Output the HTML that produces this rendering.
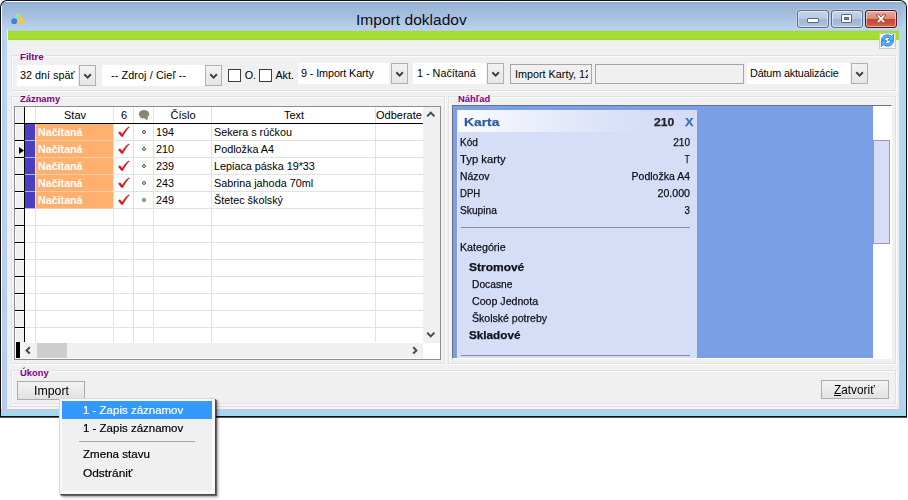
<!DOCTYPE html>
<html>
<head>
<meta charset="utf-8">
<title>Import dokladov</title>
<style>
*{box-sizing:border-box;margin:0;padding:0}
html,body{width:908px;height:500px;overflow:hidden;background:#fff}
body{position:relative;font-family:"Liberation Sans",sans-serif;font-size:10.8px;color:#000}
.abs,.abs *{position:absolute}
div{position:absolute}
span.t{position:absolute;white-space:nowrap;line-height:1}

/* window */
#win{left:0;top:0;width:907px;height:418px;background:#0b0e15;border-radius:7px 7px 0 0}
#frame{left:1px;top:1px;width:905px;height:415px;border-radius:6px 6px 0 0;
 background:linear-gradient(to bottom,#ffffff 0px,#ffffff 1px,#93acc8 1px,#99b5d7 4px,#a6bfde 15px,#bcd3ee 29px,#bdd3ee 60px,#bbcfec 300px,#bccdee 415px)}
#fl{left:1px;top:6px;width:1px;height:410px;background:#fff}
#fl2{left:2px;top:31px;width:2px;height:385px;background:rgba(190,200,215,.35)}
#fr{left:902px;top:4px;width:4px;height:412px;-webkit-mask-image:linear-gradient(to bottom,rgba(0,0,0,.15) 0,rgba(0,0,0,.45) 14px,#000 34px);mask-image:linear-gradient(to bottom,rgba(0,0,0,.15) 0,rgba(0,0,0,.45) 14px,#000 34px);background:linear-gradient(to right,rgba(154,223,245,0),#a6dbea 38%,#9adff5 62%,#9adff5)}
#fb{left:1px;top:409px;width:905px;height:7px;background:linear-gradient(to bottom,#b9d1dc 0,#b9d0de 2px,#bccdee 2px,#bccdee 4px,#93e0f6 5px,#8fe0f6 7px)}
#fd2{left:0;top:417px;width:907px;height:1px;background:#555}
#client{left:7px;top:30px;width:892px;height:379px;background:#f0f0f0;border-left:2px solid #e6f0fb;border-right:1px solid #e6f2fa;border-bottom:2px solid #eef4fb;box-shadow:inset 0 -1px 0 #e5dfdf}
#green{left:8px;top:30px;width:891px;height:11px;background:linear-gradient(to bottom,#b4d8b0 0,#b4d8b0 1px,#a3d44c 1px,#a3d44c 2px,#a6dd35 2px,#a6dd35 9px,#a3d03c 9px,#a3d03c 10px,#e6f3cc 10px,#e6f3cc 11px)}
#title{left:356px;top:12px;font-size:15.5px;color:#0c0c14;letter-spacing:0.035px}

/* caption buttons */
.cb{top:10px;height:18px;border:1px solid #5b6c88;border-radius:3px;box-shadow:inset 0 0 0 1px rgba(255,255,255,.5), 0 0 0 1px rgba(255,255,255,.25)}
#bmin{left:797px;width:32px;background:linear-gradient(#c6d5ea 0,#b6c8e1 48%,#9fb5d3 52%,#adc2de 100%)}
#bmax{left:831px;width:32px;background:linear-gradient(#c6d5ea 0,#b6c8e1 48%,#9fb5d3 52%,#adc2de 100%)}
#bcls{left:865px;width:32px;border-color:#4a1a1c;background:linear-gradient(#e8ac9f 0,#dd8677 48%,#c7432c 52%,#d3654a 100%)}

/* group boxes */
.gb{border:1px solid #e1e1e1;box-shadow:inset 1px 1px 0 #fbfbfb, 1px 1px 0 #fbfbfb}
.gl{font-weight:bold;color:#800080;font-size:9.4px;background:#f0f0f0;padding:0 1px}

/* combos */
.cw{background:#fff;height:21px}
.cbtn{width:17px;height:21px;border:1px solid #b0b0b0;background:linear-gradient(#f2f2f2,#e6e6e6)}
.cbtn svg{position:absolute;left:3px;top:7px}
.inp{border:1px solid #a5a5a5;background:#f0f0f0;height:20px}
.chk{width:13px;height:13px;border:1px solid #3c3c3c;background:#fff}

/* grid */
#grid{left:14px;top:106px;width:427px;height:254px;border:1px solid #8e8e90;background:#fff}
.vl{width:1px;background:#e2e2e2}
.hl{height:1px;background:#e2e2e2}
.btn{border:1px solid #acacac;background:linear-gradient(#f3f3f3,#e2e2e2);text-align:center}

#prev span.t{-webkit-text-stroke-width:.25px}
#menu span.t{-webkit-text-stroke-width:.2px}
/* menu */
#menu{left:59px;top:398px;width:156px;height:96px;background:#f0f0f0;box-shadow:inset 1px 1px 0 #d9d9d9,inset -1px -1px 0 #f6f6f6,inset 0 0 0 3px #f9f9f9,1px 1px 0 rgba(70,70,70,.85),2px 2px 1px rgba(0,0,0,.45),3px 3px 3px rgba(0,0,0,.35)}
.mi{left:1px;width:150px;height:18px;font-size:12px}
</style>
</head>
<body>
<div id="win"></div>
<div id="frame"></div>
<div id="fl"></div><div id="fl2"></div><div id="fb"></div><div id="fr"></div><div id="fd2"></div>
<div id="client"></div>
<div id="green"></div>
<span class="t" id="title">Import dokladov</span>

<!-- app icon -->
<svg style="position:absolute;left:9px;top:11px;filter:blur(.55px)" width="20" height="16" viewBox="0 0 20 16">
 <circle cx="8.5" cy="5" r="2.5" fill="#84e8ac"/>
 <path d="M12 2.6 L16 12.6 L7.6 12.6 Z" fill="#f1c648"/>
 <circle cx="5.2" cy="10.2" r="2.9" fill="#3a84e8"/>
</svg>

<!-- caption buttons -->
<div class="cb" id="bmin"><div style="left:9px;top:7px;width:12px;height:5px;background:#fff;border:1px solid #596880;border-radius:1px"></div></div>
<div class="cb" id="bmax"><div style="left:9px;top:3px;width:11px;height:9px;background:#fff;border:1px solid #596880;border-radius:1px"></div><div style="left:12px;top:6px;width:5px;height:3px;background:#7b8aa3;border:1px solid #56657d"></div></div>
<div class="cb" id="bcls">
 <svg style="position:absolute;left:9px;top:3px" width="12" height="10" viewBox="0 0 12 10"><path d="M1 0.9 L4.2 0.9 L6 3 L7.8 0.9 L11 0.9 L7.7 4.8 L11 8.7 L7.8 8.7 L6 6.6 L4.2 8.7 L1 8.7 L4.3 4.8 Z" fill="#fff" stroke="#8a3a30" stroke-width=".8" stroke-linejoin="round"/></svg>
</div>

<!-- refresh icon -->
<div style="left:879px;top:33px;width:17px;height:16px;background:#f6f7f9;border:1px solid #c6cad3"></div>
<svg style="position:absolute;left:880px;top:33px" width="15" height="15" viewBox="0 0 15 15">
 <g stroke="#1b72d6" stroke-width=".8" stroke-linejoin="round" fill="#58b4f4">
 <path d="M1.6 7.2 C1.6 3.6 5.2 1.4 8.4 2 C9.8 2.3 10.8 2.9 11.6 3.6 L13.6 1.4 L13.6 7.2 L8 7.2 L9.8 5.4 C8.6 4.3 6.8 4.1 5.6 4.9 C4.8 5.4 4.4 6.2 4.3 7.2 Z"/>
 <path d="M13.4 7.8 C13.4 11.4 9.8 13.6 6.6 13 C5.2 12.7 4.2 12.1 3.4 11.4 L1.4 13.6 L1.4 7.8 L7 7.8 L5.2 9.6 C6.4 10.7 8.2 10.9 9.4 10.1 C10.2 9.6 10.6 8.8 10.7 7.8 Z"/>
 </g>
</svg>

<!-- Filtre group -->
<div class="gb" style="left:11px;top:55px;width:885px;height:36px"></div>
<span class="t gl" style="left:19px;top:52px;font-size:9.7px">Filtre</span>

<div class="cw" style="left:17px;top:65px;width:61px"></div>
<span class="t" style="left:20px;top:70px">32 dní späť</span>
<div class="cbtn" style="left:79px;top:65px"><svg width="10" height="7" viewBox="0 0 10 7"><path d="M1.3 1.2 L4.6 4.6 L7.9 1.2" fill="none" stroke="#404040" stroke-width="2"/></svg></div>

<div class="cw" style="left:102px;top:65px;width:103px"></div>
<span class="t" style="left:111px;top:70px;letter-spacing:.1px">-- Zdroj / Cieľ --</span>
<div class="cbtn" style="left:205px;top:65px"><svg width="10" height="7" viewBox="0 0 10 7"><path d="M1.3 1.2 L4.6 4.6 L7.9 1.2" fill="none" stroke="#404040" stroke-width="2"/></svg></div>

<div class="chk" style="left:228px;top:69px"></div>
<span class="t" style="left:244.7px;top:70px">O.</span>
<div class="chk" style="left:259px;top:69px"></div>
<span class="t" style="left:275.4px;top:70px">Akt.</span>

<div class="cw" style="left:298px;top:63px;width:91px"></div>
<span class="t" style="left:301px;top:68px;letter-spacing:-.1px">9 - Import Karty</span>
<div class="cbtn" style="left:391px;top:63px"><svg width="10" height="7" viewBox="0 0 10 7"><path d="M1.3 1.2 L4.6 4.6 L7.9 1.2" fill="none" stroke="#404040" stroke-width="2"/></svg></div>

<div class="cw" style="left:413px;top:63px;width:73px"></div>
<span class="t" style="left:417px;top:68px">1 - Načítaná</span>
<div class="cbtn" style="left:487px;top:63px"><svg width="10" height="7" viewBox="0 0 10 7"><path d="M1.3 1.2 L4.6 4.6 L7.9 1.2" fill="none" stroke="#404040" stroke-width="2"/></svg></div>

<div class="inp" style="left:510px;top:64px;width:82px"><div style="left:0;top:0;width:77px;height:18px;overflow:hidden"><span class="t" style="left:4px;top:4px">Import Karty, 12</span></div></div>
<div class="inp" style="left:595px;top:64px;width:149px"></div>

<div class="cw" style="left:747px;top:63px;width:103px"></div>
<span class="t" style="left:750px;top:68px;letter-spacing:-.15px">Dátum aktualizácie</span>
<div class="cbtn" style="left:851px;top:63px"><svg width="10" height="7" viewBox="0 0 10 7"><path d="M1.3 1.2 L4.6 4.6 L7.9 1.2" fill="none" stroke="#404040" stroke-width="2"/></svg></div>

<!-- Zaznamy group -->
<div class="gb" style="left:11px;top:96px;width:434px;height:268px"></div>
<span class="t gl" style="left:19px;top:94px">Záznamy</span>
<div id="grid">
<div style="left:0px;top:0px;width:9px;height:235px;background:#f0f0f0;border-left:1px solid #fff"></div>
<div class="vl" style="left:20px;top:0px;height:235px"></div>
<div class="vl" style="left:98px;top:0px;height:235px"></div>
<div class="vl" style="left:118px;top:0px;height:235px"></div>
<div class="vl" style="left:138px;top:0px;height:235px"></div>
<div class="vl" style="left:196px;top:0px;height:235px"></div>
<div class="vl" style="left:360px;top:0px;height:235px"></div>
<div class="hl" style="left:10px;top:33px;width:398px"></div>
<div style="left:0px;top:33px;width:9px;height:1px;background:#000"></div>
<div style="left:0px;top:34px;width:9px;height:1px;background:#fff"></div>
<div class="hl" style="left:10px;top:50px;width:398px"></div>
<div style="left:0px;top:50px;width:9px;height:1px;background:#000"></div>
<div style="left:0px;top:51px;width:9px;height:1px;background:#fff"></div>
<div class="hl" style="left:10px;top:67px;width:398px"></div>
<div style="left:0px;top:67px;width:9px;height:1px;background:#000"></div>
<div style="left:0px;top:68px;width:9px;height:1px;background:#fff"></div>
<div class="hl" style="left:10px;top:84px;width:398px"></div>
<div style="left:0px;top:84px;width:9px;height:1px;background:#000"></div>
<div style="left:0px;top:85px;width:9px;height:1px;background:#fff"></div>
<div class="hl" style="left:10px;top:101px;width:398px"></div>
<div style="left:0px;top:101px;width:9px;height:1px;background:#000"></div>
<div style="left:0px;top:102px;width:9px;height:1px;background:#fff"></div>
<div class="hl" style="left:10px;top:118px;width:398px"></div>
<div style="left:0px;top:118px;width:9px;height:1px;background:#000"></div>
<div style="left:0px;top:119px;width:9px;height:1px;background:#fff"></div>
<div class="hl" style="left:10px;top:135px;width:398px"></div>
<div style="left:0px;top:135px;width:9px;height:1px;background:#000"></div>
<div style="left:0px;top:136px;width:9px;height:1px;background:#fff"></div>
<div class="hl" style="left:10px;top:152px;width:398px"></div>
<div style="left:0px;top:152px;width:9px;height:1px;background:#000"></div>
<div style="left:0px;top:153px;width:9px;height:1px;background:#fff"></div>
<div class="hl" style="left:10px;top:169px;width:398px"></div>
<div style="left:0px;top:169px;width:9px;height:1px;background:#000"></div>
<div style="left:0px;top:170px;width:9px;height:1px;background:#fff"></div>
<div class="hl" style="left:10px;top:186px;width:398px"></div>
<div style="left:0px;top:186px;width:9px;height:1px;background:#000"></div>
<div style="left:0px;top:187px;width:9px;height:1px;background:#fff"></div>
<div class="hl" style="left:10px;top:203px;width:398px"></div>
<div style="left:0px;top:203px;width:9px;height:1px;background:#000"></div>
<div style="left:0px;top:204px;width:9px;height:1px;background:#fff"></div>
<div class="hl" style="left:10px;top:220px;width:398px"></div>
<div style="left:0px;top:220px;width:9px;height:1px;background:#000"></div>
<div style="left:0px;top:221px;width:9px;height:1px;background:#fff"></div>
<div style="left:0px;top:17px;width:9px;height:1px;background:#fff"></div>
<div style="left:9px;top:0px;width:1px;height:235px;background:#000"></div>
<div style="left:0px;top:16px;width:408px;height:1px;background:#000"></div>
<span class="t" style="left:21px;top:3px;width:78px;text-align:center;font-size:11px;">Stav</span>
<span class="t" style="left:99px;top:3px;width:20px;text-align:center;font-size:11px;">6</span>
<span class="t" style="left:139px;top:3px;width:58px;text-align:center;font-size:11px;">Číslo</span>
<span class="t" style="left:197px;top:3px;width:164px;text-align:center;font-size:11px;">Text</span>
<div style="left:361px;top:0px;width:46px;height:16px;overflow:hidden"><span class="t" style="left:0px;top:3px;font-size:11px">Odberateľ</span></div>
<svg style="position:absolute;left:123px;top:2px" width="13" height="12" viewBox="0 0 13 12"><ellipse cx="6" cy="5.2" rx="5.2" ry="4.2" fill="#8c8676"/><path d="M6 8.4 L8.2 11 L9.6 10.4 L9.4 7 Z" fill="#8c8676"/></svg>
<div style="left:10px;top:17px;width:10px;height:16px;background:#4a3fc3"></div>
<div style="left:21px;top:17px;width:77px;height:16px;background:#ffb06e"></div>
<span class="t" style="left:23px;top:20px;font-weight:bold;color:#fff;font-size:10.7px">Načítaná</span>
<svg style="position:absolute;left:102px;top:17px" width="14" height="15" viewBox="0 0 14 15"><path d="M1.1 8.8 L3 7.2 L5.2 9.9 C7 7 9.2 4.4 11.8 2.5 L12.5 3.3 C9.9 6 7.6 9.2 5.9 12.8 L4.4 12.8 Z" fill="#e0161a"/></svg>
<div style="left:127px;top:23px;width:4px;height:4px;border-radius:2px;border:1.2px solid #5e5e5e;background:#d8d8d8"></div>
<span class="t" style="left:141px;top:20px">194</span>
<span class="t" style="left:199px;top:20px">Sekera s rúčkou</span>
<div style="left:10px;top:34px;width:10px;height:16px;background:#4a3fc3"></div>
<div style="left:21px;top:34px;width:77px;height:16px;background:#ffb06e"></div>
<span class="t" style="left:23px;top:37px;font-weight:bold;color:#fff;font-size:10.7px">Načítaná</span>
<svg style="position:absolute;left:102px;top:34px" width="14" height="15" viewBox="0 0 14 15"><path d="M1.1 8.8 L3 7.2 L5.2 9.9 C7 7 9.2 4.4 11.8 2.5 L12.5 3.3 C9.9 6 7.6 9.2 5.9 12.8 L4.4 12.8 Z" fill="#e0161a"/></svg>
<div style="left:127px;top:40px;width:4px;height:4px;border-radius:2px;border:1.2px solid #5e5e5e;background:#d8d8d8"></div>
<span class="t" style="left:141px;top:37px">210</span>
<span class="t" style="left:199px;top:37px">Podložka A4</span>
<div style="left:10px;top:51px;width:10px;height:16px;background:#4a3fc3"></div>
<div style="left:21px;top:51px;width:77px;height:16px;background:#ffb06e"></div>
<span class="t" style="left:23px;top:54px;font-weight:bold;color:#fff;font-size:10.7px">Načítaná</span>
<svg style="position:absolute;left:102px;top:51px" width="14" height="15" viewBox="0 0 14 15"><path d="M1.1 8.8 L3 7.2 L5.2 9.9 C7 7 9.2 4.4 11.8 2.5 L12.5 3.3 C9.9 6 7.6 9.2 5.9 12.8 L4.4 12.8 Z" fill="#e0161a"/></svg>
<div style="left:127px;top:57px;width:4px;height:4px;border-radius:2px;border:1.2px solid #5e5e5e;background:#d8d8d8"></div>
<span class="t" style="left:141px;top:54px">239</span>
<span class="t" style="left:199px;top:54px">Lepiaca páska 19*33</span>
<div style="left:10px;top:68px;width:10px;height:16px;background:#4a3fc3"></div>
<div style="left:21px;top:68px;width:77px;height:16px;background:#ffb06e"></div>
<span class="t" style="left:23px;top:71px;font-weight:bold;color:#fff;font-size:10.7px">Načítaná</span>
<svg style="position:absolute;left:102px;top:68px" width="14" height="15" viewBox="0 0 14 15"><path d="M1.1 8.8 L3 7.2 L5.2 9.9 C7 7 9.2 4.4 11.8 2.5 L12.5 3.3 C9.9 6 7.6 9.2 5.9 12.8 L4.4 12.8 Z" fill="#e0161a"/></svg>
<div style="left:127px;top:74px;width:4px;height:4px;border-radius:2px;border:1.2px solid #5e5e5e;background:#d8d8d8"></div>
<span class="t" style="left:141px;top:71px">243</span>
<span class="t" style="left:199px;top:71px">Sabrina jahoda 70ml</span>
<div style="left:10px;top:85px;width:10px;height:16px;background:#4a3fc3"></div>
<div style="left:21px;top:85px;width:77px;height:16px;background:#ffb06e"></div>
<span class="t" style="left:23px;top:88px;font-weight:bold;color:#fff;font-size:10.7px">Načítaná</span>
<svg style="position:absolute;left:102px;top:85px" width="14" height="15" viewBox="0 0 14 15"><path d="M1.1 8.8 L3 7.2 L5.2 9.9 C7 7 9.2 4.4 11.8 2.5 L12.5 3.3 C9.9 6 7.6 9.2 5.9 12.8 L4.4 12.8 Z" fill="#e0161a"/></svg>
<div style="left:127px;top:91px;width:4px;height:4px;border-radius:2px;border:1.2px solid #5e5e5e;background:#d8d8d8"></div>
<span class="t" style="left:141px;top:88px">249</span>
<span class="t" style="left:199px;top:88px">Štetec školský</span>
<div style="left:10px;top:33px;width:10px;height:1px;background:#b9b2ea"></div>
<div style="left:21px;top:33px;width:77px;height:1px;background:#f9cca6"></div>
<div style="left:10px;top:50px;width:10px;height:1px;background:#b9b2ea"></div>
<div style="left:21px;top:50px;width:77px;height:1px;background:#f9cca6"></div>
<div style="left:10px;top:67px;width:10px;height:1px;background:#b9b2ea"></div>
<div style="left:21px;top:67px;width:77px;height:1px;background:#f9cca6"></div>
<div style="left:10px;top:84px;width:10px;height:1px;background:#b9b2ea"></div>
<div style="left:21px;top:84px;width:77px;height:1px;background:#f9cca6"></div>
<div style="left:10px;top:101px;width:10px;height:1px;background:#b9b2ea"></div>
<div style="left:21px;top:101px;width:77px;height:1px;background:#f9cca6"></div>
<svg style="position:absolute;left:4px;top:40px" width="5" height="7" viewBox="0 0 5 7"><path d="M0 0 L5 3.5 L0 7 Z" fill="#000"/></svg>
<div style="left:408px;top:0px;width:17px;height:236px;background:#f0f0f0"></div>
<svg style="position:absolute;left:411px;top:3px" width="10" height="8" viewBox="0 0 10 8"><path d="M1.2 6.4 L4.8 2.6 L8.4 6.4" fill="none" stroke="#484848" stroke-width="2"/></svg>
<svg style="position:absolute;left:411px;top:224px" width="10" height="8" viewBox="0 0 10 8"><path d="M1.2 1.6 L4.8 5.4 L8.4 1.6" fill="none" stroke="#484848" stroke-width="2"/></svg>
<div style="left:0px;top:236px;width:408px;height:15px;background:#f0f0f0"></div>
<div style="left:0px;top:235px;width:9px;height:17px;background:#f6f6f6"></div>
<div style="left:1px;top:235px;width:4px;height:16px;background:#000"></div>
<div style="left:22px;top:236px;width:30px;height:15px;background:#cdcdcd"></div>
<svg style="position:absolute;left:9px;top:239px" width="8" height="9" viewBox="0 0 8 9"><path d="M5.8 1.3 L2.6 4.4 L5.8 7.5" fill="none" stroke="#484848" stroke-width="2"/></svg>
<svg style="position:absolute;left:396px;top:239px" width="8" height="9" viewBox="0 0 8 9"><path d="M2.2 1.3 L5.4 4.4 L2.2 7.5" fill="none" stroke="#484848" stroke-width="2"/></svg>
</div>
<!-- Nahlad group -->
<div class="gb" style="left:448px;top:96px;width:448px;height:268px"></div>
<span class="t gl" style="left:457px;top:94px">Náhľad</span>
<div id="prev" style="left:452px;top:105px;width:440px;height:254px;background:#fff;border-top:1px solid #6b7180;border-left:1px solid #6b7180;border-right:1px solid #fff;border-bottom:1px solid #fff;overflow:hidden">
<div style="left:0;top:0;width:420px;height:252px;background:#7b9fe6"></div>
<div style="left:4px;top:4px;width:240px;height:260px;background:#d5ddf7"></div>
<div style="left:4px;top:4px;width:240px;height:22px;background:linear-gradient(to right,#fbfcff 0,#eef1fc 25%,#dde3f8 60%,#d5ddf7 80%)"></div>
<div style="left:4px;top:4px;width:1px;height:260px;background:#e6ebfb"></div>
<span class="t" style="left:11.2px;top:11px;font-size:11.8px;font-weight:bold;color:#2a5caa;transform:scaleX(1.173);transform-origin:0 0">Karta</span>
<span class="t" style="left:203.41px;top:11px;font-size:10.9px;font-weight:bold;color:#23232e;transform:scaleX(1.111);transform-origin:100% 0">210</span>
<span class="t" style="left:232.2px;top:11px;font-size:10.9px;font-weight:bold;color:#3e6ec2;transform:scaleX(1.169);transform-origin:0 0">X</span>
<span class="t" style="left:7.3px;top:31px;font-size:10.8px;color:#101018;transform:scaleX(0.931);transform-origin:0 0">Kód</span>
<span class="t" style="left:218.58px;top:31px;font-size:10.8px;color:#101018;transform:scaleX(0.932);transform-origin:100% 0">210</span>
<span class="t" style="left:7.3px;top:48px;font-size:10.8px;color:#101018;transform:scaleX(1.043);transform-origin:0 0">Typ karty</span>
<span class="t" style="left:230.0px;top:48px;font-size:10.8px;color:#101018;transform:scaleX(0.743);transform-origin:100% 0">T</span>
<span class="t" style="left:7.3px;top:65px;font-size:10.8px;color:#101018;transform:scaleX(0.967);transform-origin:0 0">Názov</span>
<span class="t" style="left:176.56px;top:65px;font-size:10.8px;color:#101018;transform:scaleX(0.974);transform-origin:100% 0">Podložka A4</span>
<span class="t" style="left:7.3px;top:82px;font-size:10.8px;color:#101018;transform:scaleX(0.886);transform-origin:0 0">DPH</span>
<span class="t" style="left:203.57px;top:82px;font-size:10.8px;color:#101018;transform:scaleX(0.984);transform-origin:100% 0">20.000</span>
<span class="t" style="left:7.3px;top:99px;font-size:10.8px;color:#101018;transform:scaleX(0.943);transform-origin:0 0">Skupina</span>
<span class="t" style="left:230.59px;top:99px;font-size:10.8px;color:#101018;transform:scaleX(0.899);transform-origin:100% 0">3</span>
<div style="left:8px;top:121px;width:229px;height:1px;background:#858aa2"></div>
<span class="t" style="left:7.3px;top:136px;font-size:10.8px;color:#101018;transform:scaleX(0.988);transform-origin:0 0">Kategórie</span>
<span class="t" style="left:15.6px;top:156px;font-size:10.8px;font-weight:bold;color:#101018;transform:scaleX(1.110);transform-origin:0 0">Stromové</span>
<span class="t" style="left:18.9px;top:173px;font-size:10.8px;color:#101018;transform:scaleX(0.948);transform-origin:0 0">Docasne</span>
<span class="t" style="left:18.9px;top:190px;font-size:10.8px;color:#101018;transform:scaleX(0.983);transform-origin:0 0">Coop Jednota</span>
<span class="t" style="left:18.9px;top:207px;font-size:10.8px;color:#101018;transform:scaleX(0.977);transform-origin:0 0">Školské potreby</span>
<span class="t" style="left:15.6px;top:224px;font-size:10.8px;font-weight:bold;color:#101018;transform:scaleX(1.086);transform-origin:0 0">Skladové</span>
<div style="left:8px;top:249px;width:229px;height:1px;background:#858aa2"></div>
<div style="left:420px;top:34px;width:17px;height:104px;background:#d5ddf7;border:1px solid #9a9aa6"></div>
</div>
<!-- Ukony group -->
<div class="gb" style="left:11px;top:370px;width:885px;height:34px"></div>
<span class="t gl" style="left:19px;top:368px">Úkony</span>
<div class="btn" style="left:17px;top:381px;width:68px;height:19px"></div>
<span class="t" style="left:33.6px;top:385px;font-size:12.6px;transform:scaleX(0.980);transform-origin:0 0">Import</span>
<div class="btn" style="left:821px;top:380px;width:68px;height:19px"></div>
<span class="t" style="left:834.3px;top:384px;font-size:12.6px;transform:scaleX(0.939);transform-origin:0 0"><u>Z</u>atvoriť</span>
<!-- popup menu -->
<div id="menu">
<div class="mi" style="left:3px;top:3px;width:150px;height:18px;background:#3399ff"></div>
<span class="t" style="left:23.6px;top:7px;font-size:11.8px;color:#fff;transform:scaleX(0.974);transform-origin:0 0">1 - Zapis záznamov</span>
<span class="t" style="left:23.6px;top:25px;font-size:11.8px;color:#000;transform:scaleX(0.974);transform-origin:0 0">1 - Zapis záznamov</span>
<span class="t" style="left:23.6px;top:51px;font-size:11.8px;color:#000;transform:scaleX(0.982);transform-origin:0 0">Zmena stavu</span>
<span class="t" style="left:23.6px;top:70px;font-size:11.8px;color:#000;transform:scaleX(1.008);transform-origin:0 0">Odstrániť</span>
<div style="left:19.5px;top:43px;width:116px;height:1px;background:#a6a6a6"></div>
</div>
</body>
</html>
